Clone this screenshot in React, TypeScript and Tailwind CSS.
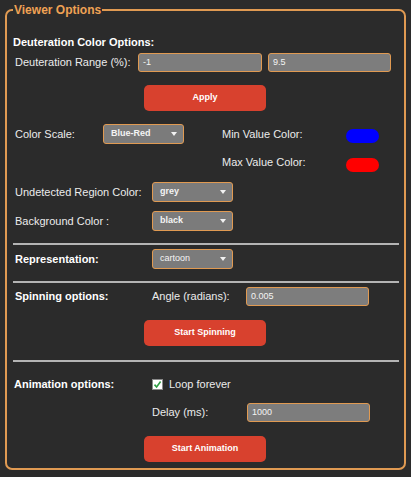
const font = { fontFamily: '"Liberation Sans", Arial, sans-serif' };

const Caret = () => (
  <svg width="6" height="4" viewBox="0 0 6 4" className="shrink-0">
    <path d="M0 0 L6 0 L3 4 Z" fill="#f2f2f2" />
  </svg>
);

const Select = ({ value, w = "w-[81px]", bold = true }: { value: string; w?: string; bold?: boolean }) => (
  <div
    className={`${w} h-[20px] flex items-center justify-between pl-[7px] pr-[6px] bg-[#7b7b7b] border-[1.5px] border-[#e09a52] rounded-[3px] text-[9px] text-[#f4f4f4] ${bold ? "font-bold" : ""}`}
  >
    <span>{value}</span>
    <Caret />
  </div>
);

const TextBox = ({ value, w = "w-[124px]" }: { value: string; w?: string }) => (
  <div
    className={`${w} h-[19px] flex items-center pl-[4px] bg-[#7d7d7d] border-[1.5px] border-[#e09a52] rounded-[3px] text-[9px] text-[#f4f4f4]`}
  >
    {value}
  </div>
);

const RedButton = ({ label, mt }: { label: string; mt: string }) => (
  <div className={`${mt} ml-[131px] w-[122px] h-[26px] flex items-center justify-center bg-[#d8412e] rounded-[5px] text-[9px] font-bold text-white`}>
    {label}
  </div>
);

const Rule = ({ mt }: { mt: string }) => <div className={`${mt} h-[2px] bg-[#b4b4b4]`} />;

export default function App() {
  return (
    <div style={font} className="w-[411px] h-[477px] bg-[#2b2b2b] pt-[3px] px-[5px] text-[11px] text-[#ececec]">
      <fieldset className="h-[467px] border-2 border-[#e09a52] rounded-[7px] pl-[6px] pr-[5px]">
        <legend className="px-[1px] text-[12px] leading-[14px] font-bold text-[#f0a254]">Viewer Options</legend>

        <div className="mt-[19px] h-[13px] leading-[13px] font-bold text-white">Deuteration Color Options:</div>

        <div className="mt-[4px] flex items-center">
          <span className="ml-[2px] w-[123px]">Deuteration Range (%):</span>
          <TextBox value="-1" />
          <div className="w-[6px]" />
          <TextBox value="9.5" w="w-[123px]" />
        </div>

        <RedButton label="Apply" mt="mt-[13px]" />

        <div className="mt-[13px] ml-[2px] grid grid-cols-[88px_119px_124px_auto] items-center h-[20px]">
          <span>Color Scale:</span>
          <Select value="Blue-Red" />
          <span>Min Value Color:</span>
          <div className="w-[33px] h-[14px] mt-[4px] rounded-full bg-[#0000ff]" />
        </div>

        <div className="mt-[8px] ml-[2px] grid grid-cols-[88px_119px_124px_auto] items-center h-[20px]">
          <span />
          <span />
          <span>Max Value Color:</span>
          <div className="w-[33px] h-[14px] mt-[5px] rounded-full bg-[#ff0000]" />
        </div>

        <div className="mt-[10px] ml-[2px] flex items-center h-[20px]">
          <span className="w-[137px]">Undetected Region Color:</span>
          <Select value="grey" />
        </div>

        <div className="mt-[9px] ml-[2px] flex items-center h-[20px]">
          <span className="w-[137px]">Background Color :</span>
          <Select value="black" />
        </div>

        <Rule mt="mt-[12px]" />

        <div className="mt-[4px] ml-[2px] flex items-center h-[20px]">
          <span className="w-[137px] font-bold text-white">Representation:</span>
          <Select value="cartoon" bold={false} />
        </div>

        <Rule mt="mt-[12px]" />

        <div className="mt-[4px] ml-[2px] flex items-center h-[19px]">
          <span className="w-[137px] font-bold text-white">Spinning options:</span>
          <span className="w-[94px]">Angle (radians):</span>
          <TextBox value="0.005" w="w-[123px]" />
        </div>

        <RedButton label="Start Spinning" mt="mt-[14px]" />

        <Rule mt="mt-[14px]" />

        <div className="mt-[12px] ml-[1px] flex items-center h-[20px]">
          <span className="w-[138px] font-bold text-white">Animation options:</span>
          <span className="w-[11px] h-[11px] mr-[6px] flex items-center justify-center bg-white border border-[#8a8a8a]">
            <svg width="9" height="9" viewBox="0 0 9 9">
              <path d="M1.5 4.6 L3.6 7 L7.6 1.6" fill="none" stroke="#2f9e44" strokeWidth="1.6" />
            </svg>
          </span>
          <span>Loop forever</span>
        </div>

        <div className="mt-[9px] ml-[139px] flex items-center h-[19px]">
          <span className="w-[95px]">Delay (ms):</span>
          <TextBox value="1000" w="w-[123px]" />
        </div>

        <RedButton label="Start Animation" mt="mt-[14px]" />
      </fieldset>
    </div>
  );
}
